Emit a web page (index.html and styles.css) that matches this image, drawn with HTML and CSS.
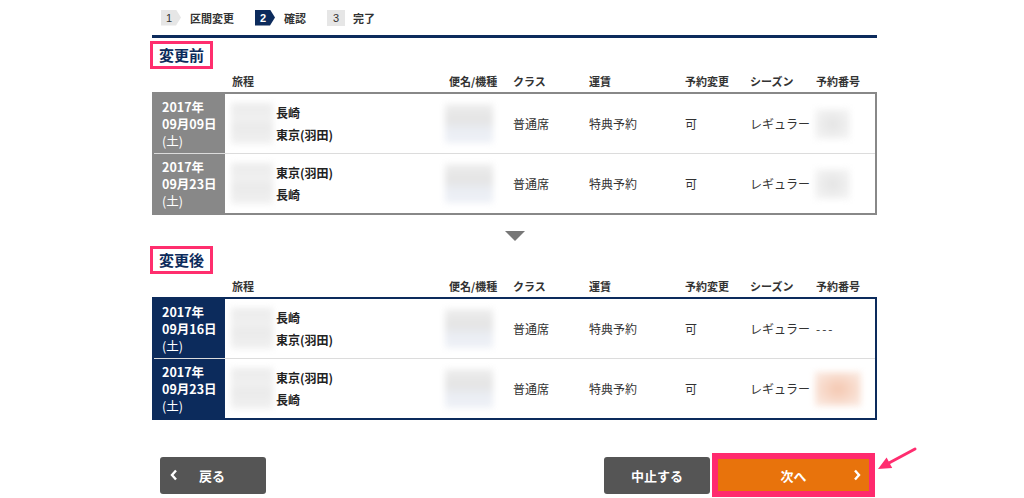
FILE: index.html
```html
<!DOCTYPE html>
<html lang="ja">
<head>
<meta charset="utf-8">
<title>区間変更 確認</title>
<link rel="stylesheet" href="styles.css">
</head>
<body>
<div class="page">
  <div class="steps">
    <div class="step"><span class="num">1</span><span class="label">区間変更</span></div>
    <div class="step active"><span class="num">2</span><span class="label">確認</span></div>
    <div class="step last"><span class="num">3</span><span class="label">完了</span></div>
  </div>
  <div class="rule"></div>

  <h2 class="sec-title">変更前</h2>
  <div class="thead grid">
    <div></div>
    <div class="h-itin">旅程</div>
    <div class="h-flight">便名/機種</div>
    <div>クラス</div>
    <div>運賃</div>
    <div>予約変更</div>
    <div>シーズン</div>
    <div>予約番号</div>
  </div>
  <div class="table before">
    <div class="row grid">
      <div class="date"><span>2017年</span><span>09月09日</span><span class="dow">(土)</span></div>
      <div class="itin"><div class="blur b-itin"></div><div class="cities"><div>長崎</div><div>東京(羽田)</div></div></div>
      <div class="flight"><div class="blur b-flight"></div></div>
      <div class="cell">普通席</div>
      <div class="cell">特典予約</div>
      <div class="cell">可</div>
      <div class="cell">レギュラー</div>
      <div class="cell num-cell"><div class="blur b-num"></div></div>
    </div>
    <div class="row grid">
      <div class="date"><span>2017年</span><span>09月23日</span><span class="dow">(土)</span></div>
      <div class="itin"><div class="blur b-itin"></div><div class="cities"><div>東京(羽田)</div><div>長崎</div></div></div>
      <div class="flight"><div class="blur b-flight"></div></div>
      <div class="cell">普通席</div>
      <div class="cell">特典予約</div>
      <div class="cell">可</div>
      <div class="cell">レギュラー</div>
      <div class="cell num-cell"><div class="blur b-num"></div></div>
    </div>
  </div>

  <div class="down"></div>

  <h2 class="sec-title second">変更後</h2>
  <div class="thead grid">
    <div></div>
    <div class="h-itin">旅程</div>
    <div class="h-flight">便名/機種</div>
    <div>クラス</div>
    <div>運賃</div>
    <div>予約変更</div>
    <div>シーズン</div>
    <div>予約番号</div>
  </div>
  <div class="table after">
    <div class="row grid">
      <div class="date"><span>2017年</span><span>09月16日</span><span class="dow">(土)</span></div>
      <div class="itin"><div class="blur b-itin"></div><div class="cities"><div>長崎</div><div>東京(羽田)</div></div></div>
      <div class="flight"><div class="blur b-flight"></div></div>
      <div class="cell">普通席</div>
      <div class="cell">特典予約</div>
      <div class="cell">可</div>
      <div class="cell">レギュラー</div>
      <div class="cell dashes">---</div>
    </div>
    <div class="row grid">
      <div class="date"><span>2017年</span><span>09月23日</span><span class="dow">(土)</span></div>
      <div class="itin"><div class="blur b-itin"></div><div class="cities"><div>東京(羽田)</div><div>長崎</div></div></div>
      <div class="flight"><div class="blur b-flight"></div></div>
      <div class="cell">普通席</div>
      <div class="cell">特典予約</div>
      <div class="cell">可</div>
      <div class="cell">レギュラー</div>
      <div class="cell num-cell"><div class="blur b-num-orange"></div></div>
    </div>
  </div>

  <div class="actions">
    <button class="btn btn-back">
      <svg class="chev" width="8" height="12" viewBox="0 0 8 12"><polyline points="6,1.5 2,6 6,10.5" fill="none" stroke="#fff" stroke-width="2.4"/></svg>
      <span class="back-label">戻る</span>
    </button>
    <div class="right-group">
      <button class="btn btn-cancel">中止する</button>
      <div class="highlight">
        <button class="btn btn-next">
          <span>次へ</span>
          <svg class="chev-r" width="8" height="12" viewBox="0 0 8 12"><polyline points="2,1.5 6,6 2,10.5" fill="none" stroke="#fff" stroke-width="2.4"/></svg>
        </button>
      </div>
    </div>
  </div>

  <svg class="pointer" width="46" height="30" viewBox="0 0 46 30">
    <line x1="41" y1="5" x2="14" y2="19.5" stroke="#ff2d6f" stroke-width="3" stroke-linecap="round"/>
    <polygon points="4,25 12.6,13.5 18.2,24.1" fill="#ff2d6f"/>
  </svg>
</div>
</body>
</html>
```

FILE: styles.css
```css
body {
  margin: 0;
  background: #fff;
  font-family: "Noto Sans CJK JP", "Noto Sans", sans-serif;
  color: #333;
}

.page {
  position: relative;
  width: 727px;
  margin-left: 150px;
}

/* steps */
.steps {
  display: flex;
  align-items: center;
  height: 35px;
  padding-left: 11px;
}
.step {
  display: flex;
  align-items: center;
  margin-right: 21px;
  font-size: 11px;
}
.num {
  width: 20px;
  height: 16px;
  box-sizing: border-box;
  padding-left: 5px;
  display: flex;
  align-items: center;
  background: #e6e6e6;
  color: #333;
  font-family: "Liberation Sans", sans-serif;
  font-size: 11px;
  clip-path: polygon(0 0, 15px 0, 20px 50%, 15px 100%, 0 100%);
}
.step.active .num {
  background: #0c2b5c;
  color: #fff;
  font-weight: bold;
}
.step.last .num {
  width: 18px;
  clip-path: none;
  padding-left: 6px;
}
.label {
  margin-left: 9px;
  font-weight: bold;
  color: #333;
  line-height: 16px;
}
.step.last .label { margin-left: 8px; }

.rule {
  height: 3px;
  margin-left: 2px;
  background: #0c2b5c;
}

/* section title */
.sec-title {
  display: inline-block;
  margin: 3px 0 0 0;
  padding: 0 6px;
  border: 3px solid #ff2e6e;
  font-size: 15px;
  line-height: 22px;
  font-weight: bold;
  color: #0c2b5c;
}
.sec-title.second { margin-top: 5px; }

/* grids */
.grid {
  display: grid;
  grid-template-columns: 71px 220px 64px 76px 96px 65px 66px 1fr;
  align-items: center;
}
.thead {
  height: 23px;
  margin-left: 2px;
  padding: 0 2px;
  font-size: 11px;
  font-weight: bold;
  color: #333;
}
.thead > div { padding-left: 4px; }
.thead > .h-itin { padding-left: 7px; }
.thead > div:first-child { padding-left: 0; }

.table {
  margin-left: 2px;
  border: 2px solid #888;
}
.table.after { border-color: #0c2b5c; }

.row {
  height: 59px;
  align-items: stretch;
}
.row + .row { border-top: 1px solid #dcdcdc; }

.date {
  display: flex;
  flex-direction: column;
  justify-content: center;
  padding-left: 8px;
  background: #888;
  color: #fff;
  font-size: 12.5px;
  line-height: 17px;
  font-weight: bold;
  white-space: nowrap;
}
.table.after .date { background: #0c2b5c; }
.dow { font-weight: normal; }

.itin {
  display: flex;
  align-items: center;
  padding-left: 6px;
}
.cities {
  margin-left: 3px;
  font-size: 12px;
  line-height: 22px;
  font-weight: bold;
  color: #222;
}

.flight {
  display: flex;
  align-items: center;
}

.cell {
  display: flex;
  align-items: center;
  padding-left: 4px;
  font-size: 12px;
  color: #333;
}
.num-cell { padding-left: 3px; }
.dashes { letter-spacing: 2px; }

/* blurred placeholders */
.blur { filter: blur(3px); }
.b-itin {
  width: 42px;
  height: 41px;
  background: linear-gradient(#ececec, #f0f0f0 45%, #eaeaea 55%, #f1f1f1);
}
.b-flight {
  width: 48px;
  height: 39px;
  background: linear-gradient(#eeeeee, #e4e4e4 40%, #ebeef4 70%, #eef1f7);
}
.b-num {
  width: 35px;
  height: 30px;
  background: radial-gradient(ellipse at center, #e4e4e4, #f3f3f3 80%);
}
.b-num-orange {
  width: 46px;
  height: 34px;
  background: radial-gradient(ellipse at center, #f4c7b0, #fae6dc 80%);
}

/* arrow */
.down {
  width: 0;
  height: 0;
  margin: 16px 0 0 355px;
  border-left: 10px solid transparent;
  border-right: 10px solid transparent;
  border-top: 10px solid #777;
}

/* actions */
.actions {
  display: flex;
  justify-content: space-between;
  align-items: center;
  margin-top: 33px;
  padding: 0 2px 0 10px;
}
.btn {
  border: none;
  margin: 0;
  font-family: "Noto Sans CJK JP", "Noto Sans", sans-serif;
  font-size: 13px;
  font-weight: bold;
  color: #fff;
  cursor: pointer;
}
.btn-back {
  display: flex;
  align-items: center;
  width: 106px;
  height: 37px;
  padding: 0 0 0 10px;
  background: #555;
  border-radius: 3px;
}
.back-label { margin-left: 21px; }
.right-group {
  display: flex;
  align-items: center;
  gap: 2px;
}
.btn-cancel {
  width: 106px;
  height: 37px;
  background: #555;
  border-radius: 3px;
}
.highlight {
  border: 6px solid #ff2a6e;
  display: flex;
}
.btn-next {
  position: relative;
  width: 151px;
  height: 32px;
  background: #e8730c;
  display: flex;
  align-items: center;
  justify-content: center;
}
.chev-r {
  position: absolute;
  right: 8px;
  top: 10px;
}

.pointer {
  position: absolute;
  left: 724px;
  top: 444px;
}
```
